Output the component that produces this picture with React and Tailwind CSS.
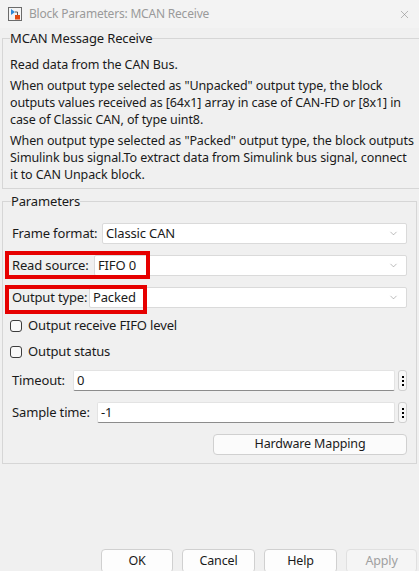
import { ChevronDown, X } from 'lucide-react';

function Combo({ value }) {
  return (
    <div className="flex-1 h-[21px] bg-white border border-[#dadada] rounded-[2px] flex items-center justify-between pl-[3px] pr-[7px]">
      <span>{value}</span>
      <ChevronDown size={11} strokeWidth={1.1} className="text-[#7a7a7a]" />
    </div>
  );
}

function Field({ label, value, labelW }) {
  return (
    <div className="flex items-center h-[21px]">
      <span className={labelW}>{label}</span>
      <div className="flex-1 h-[21px] bg-white border border-[#e3e3e3] border-b-[#8c8c8c] rounded-[2px] flex items-center pl-[3px]">
        {value}
      </div>
      <div className="ml-[3px] mr-[9px] w-[9px] h-[21px] border border-[#d0d0d0] rounded-[3px] bg-[#f7f7f7] flex flex-col items-center justify-center gap-[2px]">
        <span className="w-[2px] h-[2px] bg-black" />
        <span className="w-[2px] h-[2px] bg-black" />
        <span className="w-[2px] h-[2px] bg-black" />
      </div>
    </div>
  );
}

function Check({ label }) {
  return (
    <label className="flex items-center h-[20px] pl-[9px]">
      <span className="w-[12px] h-[12px] border border-[#3c3c3c] rounded-[3px] bg-[#f9f9f9]" />
      <span className="ml-[6px]">{label}</span>
    </label>
  );
}

const para2 = [
  'When output type selected as "Unpacked" output type, the block',
  'outputs values received as [64x1] array in case of CAN-FD or [8x1] in',
  'case of Classic CAN, of type uint8.',
];
const para3 = [
  'When output type selected as "Packed" output type, the block outputs',
  'Simulink bus signal.To extract data from Simulink bus signal, connect',
  'it to CAN Unpack block.',
];

export default function App() {
  return (
    <div className="w-[419px] h-[571px] bg-[#f0f0f0] flex flex-col overflow-hidden text-[13px] tracking-[-0.15px] text-[#1a1a1a] font-['Noto_Sans',sans-serif]">
      <div className="h-[28px] bg-[#f3f3f3] flex items-center pl-[8px] pr-[8px] shrink-0">
        <svg width="14" height="14" viewBox="0 0 14 14">
          <rect x="0.5" y="0.5" width="13" height="13" fill="#f4f4f4" stroke="#6b6b6b" />
          <path d="M3 2 L3 8 L7 5 Z" fill="#2b8ad8" />
          <path d="M7 5 L9.5 5 L9.5 8" fill="none" stroke="#333" strokeWidth="0.8" />
          <rect x="7" y="8" width="5" height="4.5" fill="#e04a12" />
        </svg>
        <span className="ml-[7px] text-[12px] tracking-[-0.2px] text-[#9a9a9a]">
          Block Parameters: MCAN Receive
        </span>
        <X size={13} strokeWidth={1} className="ml-auto text-[#808080]" />
      </div>

      <fieldset className="mx-[2px] border border-[#d6d6d6] px-[7px] pb-[5px]">
        <legend className="leading-[20px]">MCAN Message Receive</legend>
        <div className="leading-[17px] text-[12.5px] tracking-[-0.1px] flex flex-col gap-[4px] pt-[8px] whitespace-nowrap">
          <p>Read data from the CAN Bus.</p>
          <p>
            {para2.map((l) => (
              <span key={l} className="block">{l}</span>
            ))}
          </p>
          <p>
            {para3.map((l) => (
              <span key={l} className="block">{l}</span>
            ))}
          </p>
        </div>
      </fieldset>

      <fieldset className="mt-[2px] mx-[2px] border border-[#d6d6d6] pl-[9px] pr-[9px] pb-[8px]">
        <legend className="leading-[20px] -ml-[1px]">Parameters</legend>
        <div className="flex flex-col pt-[12px]">
          <div className="flex items-center">
            <span className="w-[90px] shrink-0">Frame format:</span>
            <Combo value="Classic CAN" />
          </div>
          <div className="relative flex items-center mt-[11px]">
            <span className="w-[82px] shrink-0">Read source:</span>
            <Combo value="FIFO 0" />
            <div className="absolute left-[-7px] top-[-4px] w-[145px] h-[28px] border-[4px] border-[#e60000]" />
          </div>
          <div className="relative flex items-center mt-[11px]">
            <span className="w-[77px] shrink-0">Output type:</span>
            <Combo value="Packed" />
            <div className="absolute left-[-7px] top-[-2px] w-[142px] h-[29px] border-[4px] border-[#e60000]" />
          </div>
          <div className="flex flex-col gap-[6px] mt-[8px] -ml-[11px]">
            <Check label="Output receive FIFO level" />
            <Check label="Output status" />
          </div>
          <div className="flex flex-col gap-[11px] mt-[8px] -mr-[9px]">
            <Field label="Timeout:" value="0" labelW="w-[61px]" />
            <Field label="Sample time:" value="-1" labelW="w-[85px]" />
          </div>
          <div className="flex justify-end mt-[11px]">
            <button className="w-[194px] h-[21px] bg-[#fbfbfb] border border-[#d0d0d0] rounded-[4px] text-[12.5px]">
              Hardware Mapping
            </button>
          </div>
        </div>
      </fieldset>

      <div className="mt-auto flex justify-end gap-[9px] pr-[2px] translate-y-[2px] text-[12.5px]">
        <button className="w-[72px] h-[24px] bg-[#fdfdfd] border border-[#d0d0d0] rounded-[4px]">OK</button>
        <button className="w-[73px] h-[24px] bg-[#fdfdfd] border border-[#d0d0d0] rounded-[4px]">Cancel</button>
        <button className="w-[73px] h-[24px] bg-[#fdfdfd] border border-[#d0d0d0] rounded-[4px]">Help</button>
        <button className="w-[71px] h-[24px] bg-[#f5f5f5] border border-[#e0e0e0] rounded-[4px] text-[#a0a0a0]">Apply</button>
      </div>
    </div>
  );
}
